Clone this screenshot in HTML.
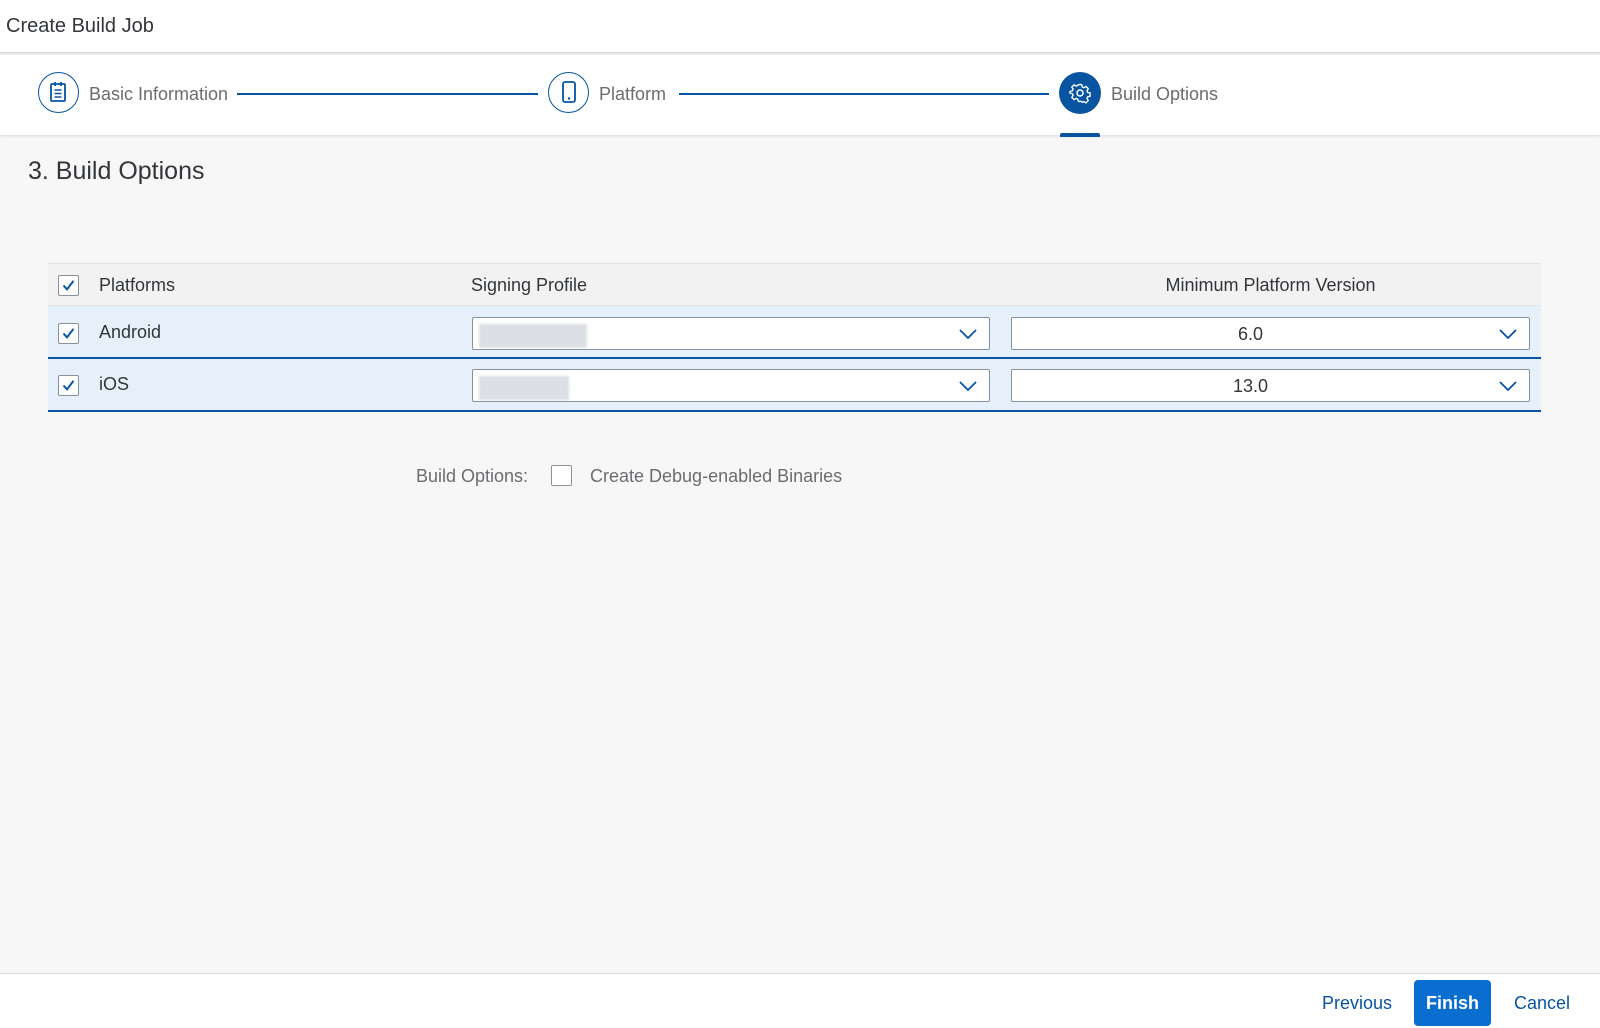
<!DOCTYPE html>
<html><head><meta charset="utf-8"><style>
*{box-sizing:border-box;margin:0;padding:0}
body{width:1600px;height:1028px;background:#f7f7f7;font-family:"Liberation Sans",Arial,sans-serif;color:#32363a;position:relative;overflow:hidden}
.a{position:absolute}
.t{font-size:18px;line-height:20px}
.cb{position:absolute;width:21px;height:21px;border:1px solid #89919a;border-radius:2px;background:#fff}
.cb svg{position:absolute;left:2px;top:2px}
.sel{position:absolute;height:33px;background:#fff;border:1px solid #89919a;border-radius:2px}
.sel .v{position:absolute;left:0;right:40px;top:6px;text-align:center;font-size:18px}
.sel svg{position:absolute;right:12px;top:10px}
.blur{position:absolute;left:6px;top:6px;height:24px;background:#dcdfe3;filter:blur(1px)}
</style></head><body>
<div class="a" style="left:0;top:0;width:1600px;height:53px;background:#fff;border-bottom:1px solid #d9d9d9;box-shadow:0 1px 2px rgba(0,0,0,.08)"></div>
<div class="a" style="left:6px;top:15px;font-size:20px;color:#32363a">Create Build Job</div>
<div class="a" style="left:0;top:55px;width:1600px;height:80px;background:#fff;box-shadow:0 1px 3px rgba(0,0,0,.12)"></div>
<div class="a" style="left:38px;top:72px;width:41px;height:41px;border:1.5px solid #0854a0;border-radius:50%;background:#fff"></div>
<svg class="a" style="left:48px;top:81px" width="20" height="22" viewBox="0 0 20 22"><rect x="3" y="3" width="14" height="17" rx="1" fill="none" stroke="#0854a0" stroke-width="1.8"/><line x1="7" y1="1" x2="7" y2="5" stroke="#0854a0" stroke-width="1.8"/><line x1="13" y1="1" x2="13" y2="5" stroke="#0854a0" stroke-width="1.8"/><line x1="6.5" y1="9" x2="13.5" y2="9" stroke="#0854a0" stroke-width="1.5"/><line x1="6.5" y1="12.5" x2="13.5" y2="12.5" stroke="#0854a0" stroke-width="1.5"/><line x1="6.5" y1="16" x2="13.5" y2="16" stroke="#0854a0" stroke-width="1.5"/></svg>
<div class="a t" style="left:89px;top:84px;color:#6a6d70">Basic Information</div>
<div class="a" style="left:237px;top:93px;width:301px;height:1.5px;background:#0854a0"></div>
<div class="a" style="left:548px;top:72px;width:41px;height:41px;border:1.5px solid #0854a0;border-radius:50%;background:#fff"></div>
<svg class="a" style="left:561px;top:81px" width="16" height="22" viewBox="0 0 16 22"><rect x="2" y="1" width="12" height="20" rx="2" fill="none" stroke="#0854a0" stroke-width="1.8"/><circle cx="8" cy="17.5" r="1.2" fill="#0854a0"/></svg>
<div class="a t" style="left:599px;top:84px;color:#6a6d70">Platform</div>
<div class="a" style="left:679px;top:93px;width:370px;height:1.5px;background:#0854a0"></div>
<div class="a" style="left:1059px;top:72px;width:42px;height:42px;border-radius:50%;background:#0854a0"></div>
<svg class="a" style="left:1069px;top:82px" width="22" height="22" viewBox="0 0 24 24"><path d="M10 2h4l.6 2.8 2 .9 2.4-1.6 2.8 2.8-1.6 2.4.9 2 2.8.6v4l-2.8.6-.9 2 1.6 2.4-2.8 2.8-2.4-1.6-2 .9L14 22h-4l-.6-2.8-2-.9L5 19.9 2.2 17.1 3.8 14.7l-.9-2L0 12.1V10l2.9-.6.9-2L2.2 5l2.8-2.8 2.4 1.6 2-.9z" transform="translate(1 1) scale(.92)" fill="none" stroke="#fff" stroke-width="1.6" stroke-linejoin="round"/><circle cx="12" cy="12" r="3.3" fill="none" stroke="#fff" stroke-width="1.6"/></svg>
<div class="a t" style="left:1111px;top:84px;color:#6a6d70">Build Options</div>
<div class="a" style="left:1060px;top:133px;width:40px;height:4px;background:#0854a0;border-radius:2px 2px 0 0"></div>
<div class="a" style="left:28px;top:157px;font-size:25px;color:#32363a">3. Build Options</div>
<div class="a" style="left:48px;top:263px;width:1493px;height:43px;background:#f2f2f2;border-top:1px solid #e5e5e5;border-bottom:1px solid #e5e5e5"></div>
<div class="a" style="left:48px;top:306px;width:1493px;height:53px;background:#e5f0fa;border-bottom:2px solid #0854a0"></div>
<div class="a" style="left:48px;top:359px;width:1493px;height:53px;background:#e5f0fa;border-bottom:2px solid #0854a0"></div>
<div class="cb" style="left:58px;top:275px"><svg width="15" height="15" viewBox="0 0 15 15"><path d="M2.5 7.5l3.5 3.8 6.5-8.5" fill="none" stroke="#0854a0" stroke-width="2"/></svg></div>
<div class="cb" style="left:58px;top:323px"><svg width="15" height="15" viewBox="0 0 15 15"><path d="M2.5 7.5l3.5 3.8 6.5-8.5" fill="none" stroke="#0854a0" stroke-width="2"/></svg></div>
<div class="cb" style="left:58px;top:375px"><svg width="15" height="15" viewBox="0 0 15 15"><path d="M2.5 7.5l3.5 3.8 6.5-8.5" fill="none" stroke="#0854a0" stroke-width="2"/></svg></div>
<div class="a t" style="left:99px;top:275px">Platforms</div>
<div class="a t" style="left:471px;top:275px">Signing Profile</div>
<div class="a t" style="left:1011px;top:275px;width:519px;text-align:center">Minimum Platform Version</div>
<div class="a t" style="left:99px;top:322px">Android</div>
<div class="a t" style="left:99px;top:374px">iOS</div>
<div class="sel" style="left:472px;top:317px;width:518px"><div class="blur" style="width:108px"></div><svg width="18" height="12" viewBox="0 0 18 12"><path d="M1 2l8 8 8-8" fill="none" stroke="#0854a0" stroke-width="1.8"/></svg></div>
<div class="sel" style="left:1011px;top:317px;width:519px"><div class="v">6.0</div><svg width="18" height="12" viewBox="0 0 18 12"><path d="M1 2l8 8 8-8" fill="none" stroke="#0854a0" stroke-width="1.8"/></svg></div>
<div class="sel" style="left:472px;top:369px;width:518px"><div class="blur" style="width:90px"></div><svg width="18" height="12" viewBox="0 0 18 12"><path d="M1 2l8 8 8-8" fill="none" stroke="#0854a0" stroke-width="1.8"/></svg></div>
<div class="sel" style="left:1011px;top:369px;width:519px"><div class="v">13.0</div><svg width="18" height="12" viewBox="0 0 18 12"><path d="M1 2l8 8 8-8" fill="none" stroke="#0854a0" stroke-width="1.8"/></svg></div>
<div class="a t" style="left:416px;top:466px;color:#6a6d70">Build Options:</div>
<div class="cb" style="left:551px;top:465px"></div>
<div class="a t" style="left:590px;top:466px;color:#6a6d70">Create Debug-enabled Binaries</div>
<div class="a" style="left:0;top:973px;width:1600px;height:55px;background:#fff;border-top:1px solid #d9d9d9"></div>
<div class="a t" style="left:1322px;top:993px;color:#0854a0">Previous</div>
<div class="a" style="left:1414px;top:980px;width:77px;height:46px;background:#0a6ed1;border-radius:4px;color:#fff;font-weight:bold;font-size:18px;text-align:center;line-height:46px">Finish</div>
<div class="a t" style="left:1514px;top:993px;color:#0854a0">Cancel</div>
</body></html>
